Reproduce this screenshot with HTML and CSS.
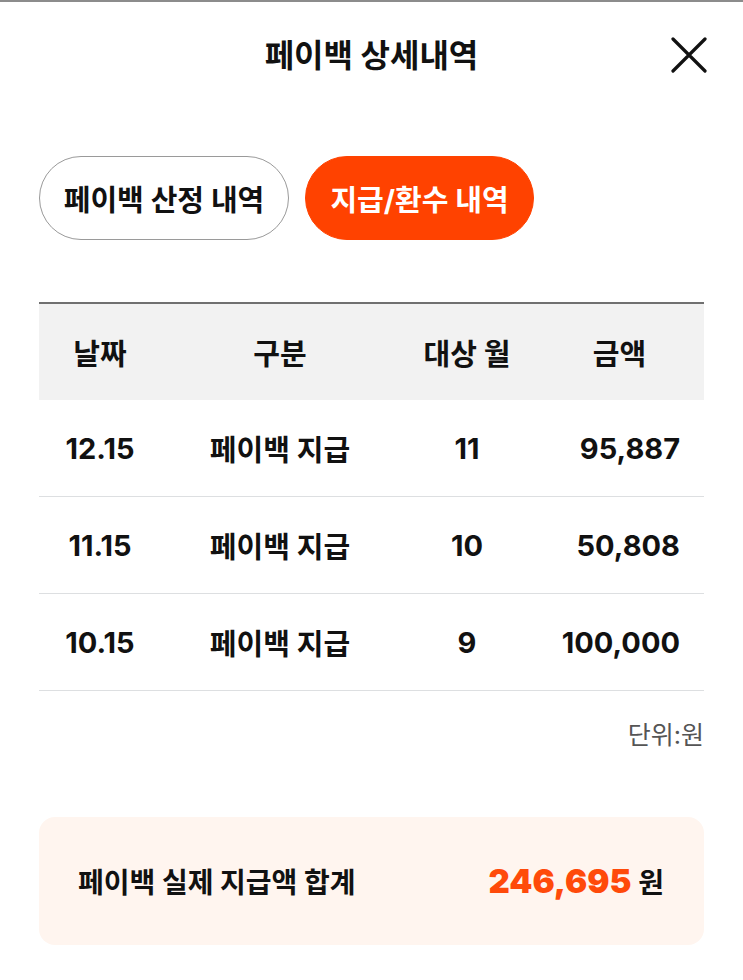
FILE: index.html
```html
<!DOCTYPE html>
<html lang="ko">
<head>
  <meta charset="UTF-8">
  <title>페이백 상세내역</title>
  <link rel="stylesheet" href="styles.css">
</head>
<body>
  <!-- Cabecera -->
  <div class="top-bar">
    <span></span>
    <h1 class="title">페이백 상세내역</h1>
    <button class="close-btn" aria-label="닫기">
      <svg width="36" height="36" viewBox="0 0 36 36">
        <path d="M2 2 L34 34 M34 2 L2 34" stroke="#111" stroke-width="3.2" stroke-linecap="round" fill="none"/>
      </svg>
    </button>
  </div>

  <!-- Pestañas -->
  <div class="tabs">
    <div class="tab">페이백 산정 내역</div>
    <div class="tab active">지급/환수 내역</div>
  </div>

  <!-- Tabla de pagos -->
  <table class="history">
    <colgroup>
      <col class="c-date">
      <col class="c-type">
      <col class="c-month">
      <col class="c-amount">
    </colgroup>
    <thead>
      <tr>
        <th>날짜</th>
        <th>구분</th>
        <th>대상 월</th>
        <th>금액</th>
      </tr>
    </thead>
    <tbody>
      <tr>
        <td>12.15</td>
        <td>페이백 지급</td>
        <td>11</td>
        <td class="amount">95,887</td>
      </tr>
      <tr>
        <td>11.15</td>
        <td>페이백 지급</td>
        <td>10</td>
        <td class="amount">50,808</td>
      </tr>
      <tr>
        <td>10.15</td>
        <td>페이백 지급</td>
        <td>9</td>
        <td class="amount">100,000</td>
      </tr>
    </tbody>
  </table>
  <div class="unit">단위:원</div>

  <!-- Total -->
  <div class="summary">
    <span class="summary-label">페이백 실제 지급액 합계</span>
    <span class="summary-value"><b>246,695</b> 원</span>
  </div>
</body>
</html>
```

FILE: styles.css
```css
/* Colores */
:root {
  --accent: #ff4200;
  --text: #111;
  --line: #dddfe1;
  --header-bg: #f2f2f2;
}
/* General */
body {
  font-family: Inter, "Noto Sans CJK KR", sans-serif;
  margin: 0;
  padding: 0;
  border-top: 2px solid #8c8c8c;
  background: #fff;
  color: var(--text);
}
/* Cabecera */
.top-bar {
  display: grid;
  grid-template-columns: 1fr auto 1fr;
  align-items: center;
  height: 102px;
  padding-bottom: 4px;
}
.title {
  margin: 0;
  font-size: 32px;
  font-weight: 700;
}
.close-btn {
  justify-self: end;
  margin-right: 36px;
  margin-top: 4px;
  padding: 0;
  border: none;
  background: none;
  display: flex;
}
/* Pestañas */
.tabs {
  display: flex;
  gap: 16px;
  padding: 0 39px;
  margin-top: 48px;
}
.tab {
  box-sizing: border-box;
  height: 84px;
  padding: 0 20px;
  border-radius: 42px;
  border: 1.5px solid #9a9a9a;
  display: flex;
  align-items: center;
  justify-content: center;
  font-size: 29px;
  font-weight: 700;
}
.tab:first-child {
  width: 250px;
}
.tab.active {
  width: 229px;
  background: var(--accent);
  border-color: var(--accent);
  color: #fff;
}
/* Tabla */
.history {
  width: 665px;
  margin: 62px 0 0 39px;
  border-collapse: collapse;
  table-layout: fixed;
  border-top: 2px solid #707070;
}
.c-date { width: 122px; }
.c-type { width: 238px; }
.c-month { width: 136px; }
.c-amount { width: 169px; }
.history th {
  height: 96px;
  padding: 0;
  background: var(--header-bg);
  font-size: 29px;
  font-weight: 700;
}
.history td {
  height: 96px;
  padding: 0;
  text-align: center;
  font-size: 29px;
  font-weight: 700;
  border-bottom: 1px solid var(--line);
}
.history td.amount {
  text-align: right;
  padding-right: 24px;
}
.unit {
  width: 665px;
  margin: 29px 0 0 39px;
  line-height: 30px;
  text-align: right;
  font-size: 25px;
  color: #555;
}
/* Total */
.summary {
  box-sizing: border-box;
  width: 665px;
  height: 128px;
  margin: 67px 0 0 39px;
  padding: 0 40px 0 39px;
  border-radius: 16px;
  background: #fff5ef;
  display: flex;
  align-items: center;
  justify-content: space-between;
  font-size: 28px;
  font-weight: 700;
}
.summary-value b {
  color: #ff4a0a;
  font-size: 33px;
}
```
